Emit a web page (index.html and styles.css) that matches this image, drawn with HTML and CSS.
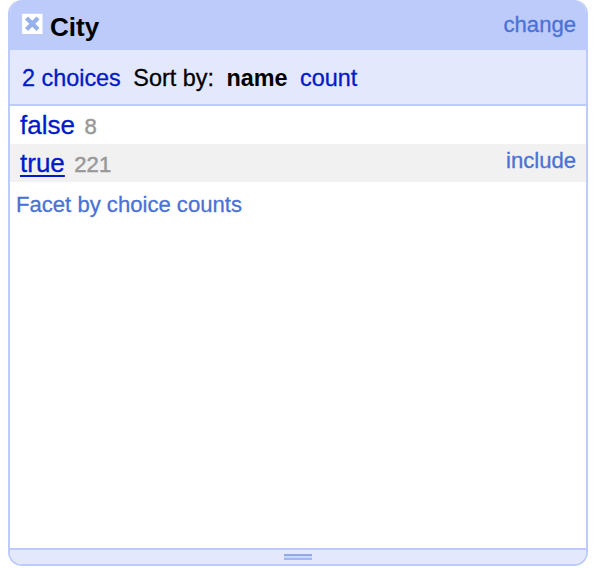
FILE: index.html
```html
<!DOCTYPE html>
<html lang="en">
<head>
<meta charset="utf-8">
<title>City</title>
<link rel="stylesheet" href="styles.css">
</head>
<body>
<section class="facet">
  <header class="title-bar">
    <svg class="close" width="22" height="22" viewBox="0 0 22 22"><rect x=".1" y=".8" width="20.4" height="20.2" fill="#fff"/><path d="M4.500 5L16 16.500M16 5L4.500 16.500" stroke="#97b2ea" stroke-width="4.400"/></svg>
    <h1 class="title">City</h1>
    <a class="action">change</a>
  </header>
  <div class="controls">
    <a class="link choices">2 choices</a>
    <span class="sort">Sort by:</span>
    <b class="name">name</b>
    <a class="link">count</a>
  </div>
  <div class="body">
    <div class="choice"><a class="link label">false</a><span class="count">8</span></div>
    <div class="choice hovered"><a class="link label">true</a><span class="count">221</span><a class="action include">include</a></div>
    <a class="by-count">Facet by choice counts</a>
  </div>
  <footer class="resizer"><span class="grip"></span></footer>
</section>
</body>
</html>
```
FILE: styles.css
```css
* { box-sizing: border-box; }
body { margin: 0; background: #fff; font-family: "Liberation Sans", Arial, sans-serif; font-size: 23.4px; line-height: 26px; -webkit-text-stroke: .3px currentColor; }
.facet { width: 580px; height: 566px; margin-left: 8px; border: 2px solid #bccbfa; border-top: 0; border-radius: 14px; overflow: hidden; display: flex; flex-direction: column; }
.title-bar { height: 50px; background: #bccbfa; display: flex; align-items: flex-start; padding: 13px 10px 0 12px; }
.close { flex: none; }
.title { margin: 1px 0 0 6px; font-size: 26px; line-height: 26px; -webkit-text-stroke: 0; }
.action { margin-left: auto; margin-top: -1px; color: #4a72d4; font-size: 22.1px; }
.controls { height: 56px; background: #e3e8fd; border-bottom: 2px solid #bccbfa; display: flex; align-items: center; padding: 1px 0 0 12px; white-space: nowrap; }
.link { color: #001ac8; }
.choices, .sort, .name { margin-right: 12.5px; }
.name { font-weight: bold; -webkit-text-stroke: 0; }
.body { flex: 1; }
.choice { height: 38px; display: flex; align-items: center; padding: 0 10px; }
.label { font-size: 26px; }
.count { color: #999; font-size: 22.1px; margin: 3px 0 0 9.5px; -webkit-text-stroke: .5px #999; }
.hovered { background: #f1f1f1; }
.hovered .label { text-decoration: underline; text-decoration-thickness: 2px; text-underline-offset: 3px; }
.include { margin-top: -5px; }
.by-count { display: block; margin: 10px 0 0 6px; color: #4a72d4; font-size: 22.1px; }
.resizer { height: 16px; border-top: 2px solid #bccbfa; background: #e3e8fd; display: flex; justify-content: center; padding-top: 4px; }
.grip { width: 28px; height: 6px; background: #c9d7fa; border-top: 2px solid #91abe9; border-bottom: 2px solid #a1b9f0; }
```
